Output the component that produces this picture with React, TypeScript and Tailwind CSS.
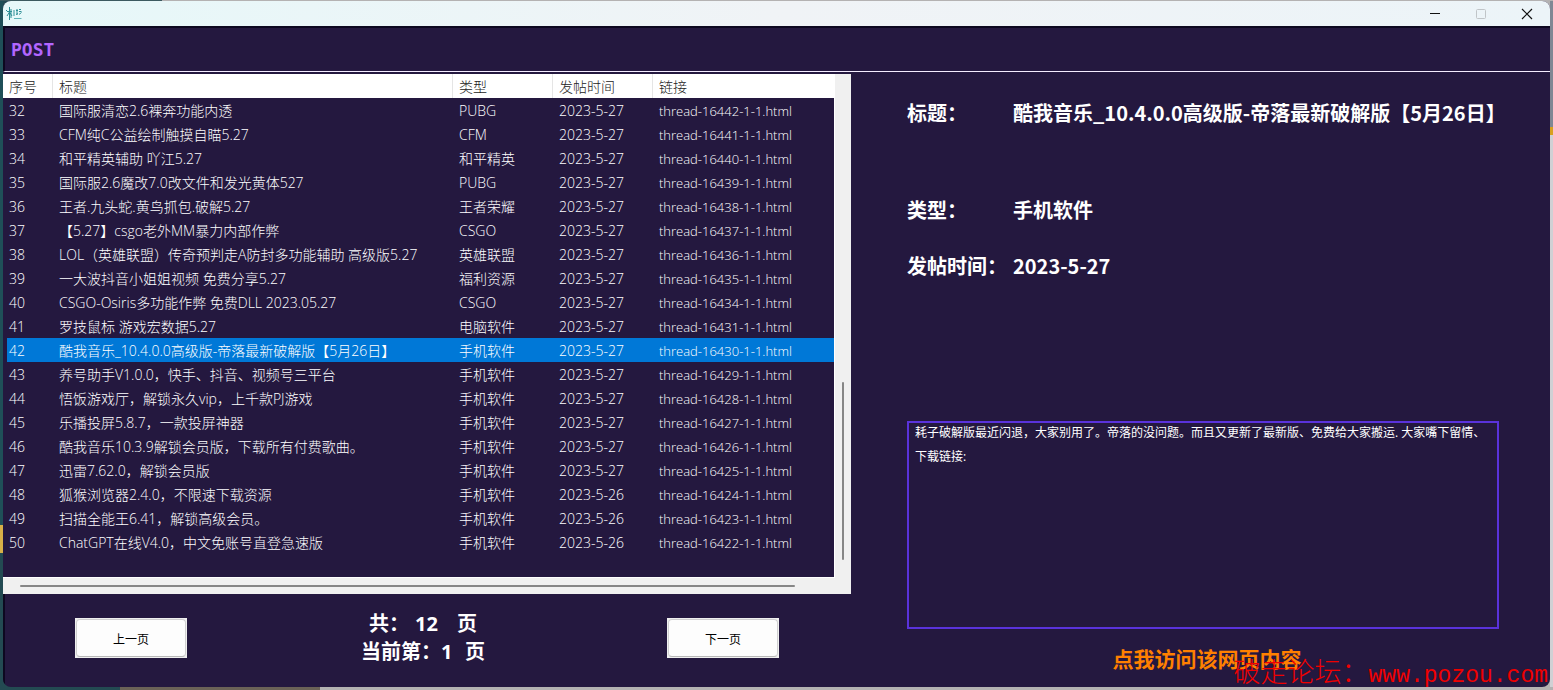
import React from 'react';

interface Post {
  id: number;
  title: string;
  type: string;
  date: string;
  link: string;
}

const posts: Post[] = [
  { id: 32, title: '国际服清恋2.6裸奔功能内透', type: 'PUBG', date: '2023-5-27', link: 'thread-16442-1-1.html' },
  { id: 33, title: 'CFM纯C公益绘制触摸自瞄5.27', type: 'CFM', date: '2023-5-27', link: 'thread-16441-1-1.html' },
  { id: 34, title: '和平精英辅助 吖江5.27', type: '和平精英', date: '2023-5-27', link: 'thread-16440-1-1.html' },
  { id: 35, title: '国际服2.6魔改7.0改文件和发光黄体527', type: 'PUBG', date: '2023-5-27', link: 'thread-16439-1-1.html' },
  { id: 36, title: '王者.九头蛇.黄鸟抓包.破解5.27', type: '王者荣耀', date: '2023-5-27', link: 'thread-16438-1-1.html' },
  { id: 37, title: '【5.27】csgo老外MM暴力内部作弊', type: 'CSGO', date: '2023-5-27', link: 'thread-16437-1-1.html' },
  { id: 38, title: 'LOL（英雄联盟）传奇预判走A防封多功能辅助 高级版5.27', type: '英雄联盟', date: '2023-5-27', link: 'thread-16436-1-1.html' },
  { id: 39, title: '一大波抖音小姐姐视频 免费分享5.27', type: '福利资源', date: '2023-5-27', link: 'thread-16435-1-1.html' },
  { id: 40, title: 'CSGO-Osiris多功能作弊 免费DLL 2023.05.27', type: 'CSGO', date: '2023-5-27', link: 'thread-16434-1-1.html' },
  { id: 41, title: '罗技鼠标 游戏宏数据5.27', type: '电脑软件', date: '2023-5-27', link: 'thread-16431-1-1.html' },
  { id: 42, title: '酷我音乐_10.4.0.0高级版-帝落最新破解版【5月26日】', type: '手机软件', date: '2023-5-27', link: 'thread-16430-1-1.html' },
  { id: 43, title: '养号助手V1.0.0，快手、抖音、视频号三平台', type: '手机软件', date: '2023-5-27', link: 'thread-16429-1-1.html' },
  { id: 44, title: '悟饭游戏厅，解锁永久vip，上千款PJ游戏', type: '手机软件', date: '2023-5-27', link: 'thread-16428-1-1.html' },
  { id: 45, title: '乐播投屏5.8.7，一款投屏神器', type: '手机软件', date: '2023-5-27', link: 'thread-16427-1-1.html' },
  { id: 46, title: '酷我音乐10.3.9解锁会员版，下载所有付费歌曲。', type: '手机软件', date: '2023-5-27', link: 'thread-16426-1-1.html' },
  { id: 47, title: '迅雷7.62.0，解锁会员版', type: '手机软件', date: '2023-5-27', link: 'thread-16425-1-1.html' },
  { id: 48, title: '狐猴浏览器2.4.0，不限速下载资源', type: '手机软件', date: '2023-5-26', link: 'thread-16424-1-1.html' },
  { id: 49, title: '扫描全能王6.41，解锁高级会员。', type: '手机软件', date: '2023-5-26', link: 'thread-16423-1-1.html' },
  { id: 50, title: 'ChatGPT在线V4.0，中文免账号直登急速版', type: '手机软件', date: '2023-5-26', link: 'thread-16422-1-1.html' },
];

const columns = ['序号', '标题', '类型', '发帖时间', '链接'];

const content =
  '耗子破解版最近闪退，大家别用了。帝落的没问题。而且又更新了最新版、免费给大家搬运. 大家嘴下留情、\n\n下载链接:';

const TitleBar: React.FC = () => (
  <header className="h-[25px] shrink-0 flex items-center justify-between pl-[3px] bg-linear-to-r from-[#e6f8f9] via-[#f0f3f6] to-[#ecf4f8]">
    <svg className="w-4 h-4" viewBox="0 0 16 16" fill="none" stroke="#2f8f96" aria-hidden="true">
      <path d="M3.5 1v13M1 5.500h5M1 10l2.500-4 2.500 4M5 3v9" strokeWidth="1" />
      <path d="M0.500 4v1M8 4v6" strokeWidth="1" />
      <path d="M10 4.500h2M11 3v6M10 8.500l2-1M13 3.500h2M13 5.500h2.500M13 8.500l2.500-2" strokeWidth="1" />
      <path d="M8 12.500h7.500" stroke="#5fb3b8" strokeWidth="1" />
    </svg>
    <div className="flex h-full">
      <button type="button" aria-label="最小化" className="w-[46px] flex items-center justify-center">
        <svg width="12" height="12" viewBox="0 0 12 12" stroke="#111" aria-hidden="true">
          <path d="M1 5.500h10" />
        </svg>
      </button>
      <button type="button" aria-label="最大化" disabled className="w-[46px] flex items-center justify-center">
        <svg width="12" height="12" viewBox="0 0 12 12" fill="none" stroke="#c0c5c8" aria-hidden="true">
          <rect x="1.500" y="1.500" width="9" height="9" rx="1" />
        </svg>
      </button>
      <button type="button" aria-label="关闭" className="w-[46px] flex items-center justify-center">
        <svg width="12" height="12" viewBox="0 0 12 12" stroke="#111" strokeWidth="1.200" aria-hidden="true">
          <path d="M1 1l10 10M11 1L1 11" />
        </svg>
      </button>
    </div>
  </header>
);

const PostTable: React.FC<{ selectedId: number; onSelect: (id: number) => void }> = ({ selectedId, onSelect }) => (
  <div className="h-[520px] flex bg-[#f0f0f0]">
    <div className="flex-1 min-w-0 flex flex-col">
      <div className="flex-1 bg-[#24183f] border-r border-b border-white">
        <table className="w-full table-fixed border-separate border-spacing-0 text-sm leading-[22px] font-light whitespace-nowrap">
          <colgroup>
            <col className="w-[50px]" />
            <col />
            <col className="w-[100px]" />
            <col className="w-[100px]" />
            <col className="w-[181px]" />
          </colgroup>
          <thead>
            <tr className="bg-white text-[#222]">
              {columns.map((name) => (
                <th
                  key={name}
                  scope="col"
                  className="h-6 p-0 pt-0.5 pl-1.5 text-left font-light border-r border-[#e5e5e5] last:border-white"
                >
                  {name}
                </th>
              ))}
            </tr>
          </thead>
          <tbody className="text-white">
            {posts.map((post) => (
              <tr
                key={post.id}
                onClick={() => onSelect(post.id)}
                className={post.id === selectedId ? 'bg-[#0078d7]' : ''}
              >
                <td className="h-6 p-0 pt-0.5 pl-0.5 border-l-4 border-[#24183f]">{post.id}</td>
                <td className="p-0 pt-0.5 pl-1.5">{post.title}</td>
                <td className="p-0 pt-0.5 pl-1.5">{post.type}</td>
                <td className="p-0 pt-0.5 pl-1.5">{post.date}</td>
                <td className="p-0 pt-0.5 pl-1.5 text-[13px]">{post.link}</td>
              </tr>
            ))}
          </tbody>
        </table>
      </div>
      {/* Horizontal scrollbar */}
      <div className="h-4 shrink-0 flex items-center pl-[17px] pr-10">
        <div className="h-0.5 flex-1 rounded-full bg-[#868686]" />
      </div>
    </div>
    {/* Vertical scrollbar */}
    <div className="w-4 shrink-0 flex flex-col items-center justify-end pb-[34px]">
      <div className="w-0.5 h-[178px] rounded-full bg-[#868686]" />
    </div>
  </div>
);

const PageButton: React.FC<{ label: string }> = ({ label }) => (
  <button type="button" className="w-28 h-10 p-px bg-[#f0f0f0] text-xs text-black">
    <span className="flex h-full items-center justify-center pt-[3px] rounded-[4px] border border-[#d0d0d0] border-b-[#b8b8b8] bg-[#fdfdfd]">
      {label}
    </span>
  </button>
);

const Detail: React.FC<{ post: Post }> = ({ post }) => (
  <section className="min-w-0 flex flex-col pt-[27px] pl-14 pr-[51px] text-white">
    <dl className="grid grid-cols-[106px_minmax(0,1fr)] text-xl leading-7 font-bold font-['Noto_Sans_CJK_SC',sans-serif] whitespace-nowrap">
      <dt className="h-[97px]">标题：</dt>
      <dd>{post.title}</dd>
      <dt className="h-14">类型：</dt>
      <dd>{post.type}</dd>
      <dt>发帖时间：</dt>
      <dd>{post.date}</dd>
    </dl>
    <textarea
      aria-label="内容"
      readOnly
      value={content}
      className="mt-[141px] block w-full h-[208px] resize-none border-2 border-[#5a32dc] bg-transparent px-1.5 py-1 text-xs leading-[12px] outline-none overflow-hidden"
    />
    <a href="#post" className="mt-4 self-center pl-2 text-[21px] leading-7 font-bold text-[#ff8000]">
      点我访问该网页内容
    </a>
  </section>
);

export default function App() {
  const [selectedId, setSelectedId] = React.useState(42);
  const selected = posts.find((post) => post.id === selectedId) ?? posts[0];

  return (
    <div className="relative min-h-screen flex flex-col overflow-hidden font-['Open_Sans','Noto_Sans_CJK_SC',sans-serif] bg-[#b4b2b2]">
      {/* Desktop visible around the window */}
      <div className="h-px shrink-0 bg-[linear-gradient(to_right,#3c5a60_0_162px,#b4b2b2_162px)]" />
      <div className="flex-1 flex bg-[linear-gradient(to_right,#234a52_0_120px,#6b6257_120px_320px,#b4b2b2_320px)]">
        <div className="w-[3px] shrink-0 bg-[linear-gradient(#1f4f58_0_524px,#d8b048_524px_552px,#234a52_552px)]" />
        <div className="flex-1 min-w-0 flex flex-col rounded-lg overflow-hidden bg-[#24183f]">
          <TitleBar />
          <div className="shrink-0 h-[46px] flex items-center border-t-2 border-l-2 border-t-[#0d0820] border-l-[#0d0820] border-b border-b-[#f4ecff] pl-1.5">
            <h1 className="font-['DejaVu_Sans_Mono',monospace] text-lg font-bold text-[#b266ff]">POST</h1>
          </div>
          <div className="flex-1 grid grid-cols-[848fr_699fr]">
            <div className="min-w-0 flex flex-col pt-0.5">
              <PostTable selectedId={selectedId} onSelect={setSelectedId} />
              <nav className="flex-1 flex items-start justify-between border-l-2 border-[#0d0820] pl-[70px] pr-[72px] pt-4">
                <div className="pt-2">
                  <PageButton label="上一页" />
                </div>
                <div className="flex flex-col items-center pr-2 text-xl leading-7 font-bold text-white">
                  <p className="flex">
                    共：<span className="w-12 pl-1.5">12</span>页
                  </p>
                  <p className="flex">
                    当前第：<span className="w-6">1</span>页
                  </p>
                </div>
                <div className="pt-2">
                  <PageButton label="下一页" />
                </div>
              </nav>
            </div>
            <Detail post={selected} />
          </div>
        </div>
        <div className="w-[3px] shrink-0 bg-[linear-gradient(#7f8794_0_126px,#d8a020_126px_134px,#d0d0d4_134px)]" />
      </div>
      <div className="h-[3px] shrink-0 bg-[linear-gradient(to_right,#234a52_0_120px,#6b6257_120px_320px,#b4b2b2_320px)]" />
      {/* Forum watermark */}
      <p className="absolute right-[5px] bottom-0 flex items-baseline text-[27px] leading-7 font-light text-[#f00000] whitespace-nowrap pointer-events-none">
        破走论坛：
        <span className="font-['Liberation_Mono',monospace] text-[23px]">www.pozou.com</span>
      </p>
    </div>
  );
}
